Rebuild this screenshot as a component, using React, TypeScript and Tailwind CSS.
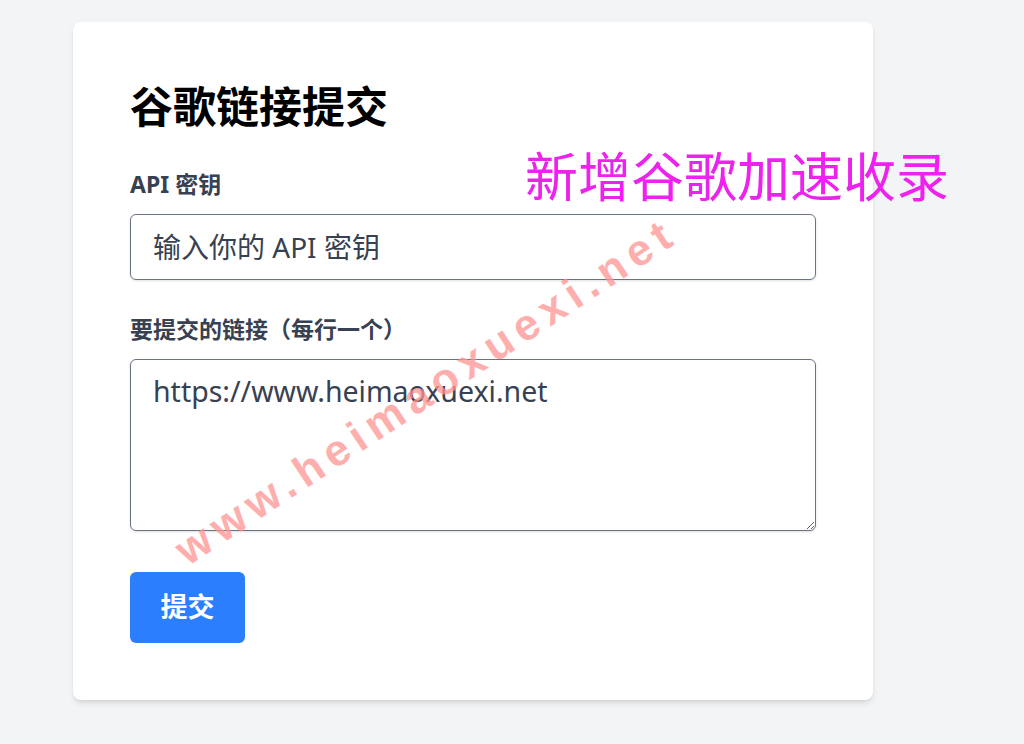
import { useState } from "react";

const font = "font-['Noto_Sans','Noto_Sans_CJK_SC',sans-serif]";

const App = () => {
  const [apiKey, setApiKey] = useState("");
  const [links, setLinks] = useState("https://www.heimaoxuexi.net");

  return (
    <div className={`relative min-h-[744px] w-full overflow-hidden bg-[#f3f4f6] ${font}`}>
      <div className="pt-[22px] pl-[73px]">
        <div className="flex w-[800px] flex-col rounded-lg bg-white px-[57px] pt-[58px] pb-[57px] shadow-md">
          <h1 className="mb-[36px] text-[43px] leading-[54px] font-bold text-black">谷歌链接提交</h1>

          <label className="text-[23px] leading-[28px] font-bold text-[#374151]">API 密钥</label>
          <input
            value={apiKey}
            onChange={(e) => setApiKey(e.target.value)}
            placeholder="输入你的 API 密钥"
            className="mt-4 h-[66px] w-full rounded-md border border-[#6b7280] px-[22px] text-[28px] text-[#374151] shadow-sm outline-none placeholder:text-[#374151]"
          />

          <label className="mt-[35px] text-[23px] leading-[28px] font-bold text-[#374151]">
            要提交的链接（每行一个）
          </label>
          <textarea
            value={links}
            onChange={(e) => setLinks(e.target.value)}
            className="mt-4 h-[172px] w-full rounded-md border border-[#6b7280] px-[22px] py-[11px] text-[28.5px] leading-[40px] text-[#374151] shadow-sm outline-none"
          />

          <div className="mt-[41px]">
            <button className="flex h-[71px] w-[115px] items-center justify-center rounded-md bg-[#2b7fff] text-[27px] font-bold text-white">
              提交
            </button>
          </div>
        </div>
      </div>

      {/* overlays */}
      <div className="pointer-events-none absolute top-[146px] left-[525px] text-[53px] leading-[62px] whitespace-nowrap text-[#ee22ee]">
        新增谷歌加速收录
      </div>
      <div className="pointer-events-none absolute top-[391px] left-[426px] -translate-x-1/2 -translate-y-1/2 -rotate-[33.5deg] font-['Liberation_Sans',sans-serif] text-[44px] leading-none font-bold tracking-[7px] whitespace-nowrap text-[#ff9494] opacity-75">
        www.heimaoxuexi.net
      </div>
    </div>
  );
};

export default App;
